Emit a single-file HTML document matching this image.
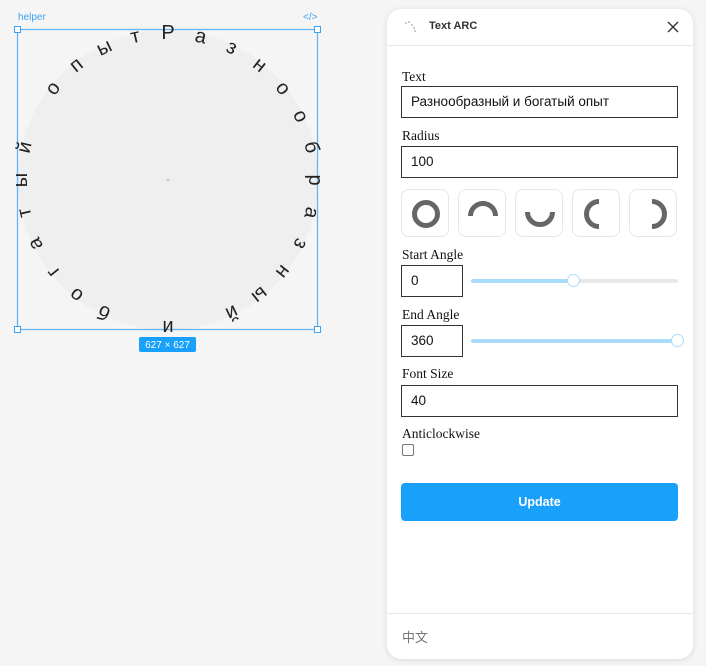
<!DOCTYPE html>
<html><head><meta charset="utf-8"><style>
*{box-sizing:border-box;margin:0;padding:0}
body{width:706px;height:666px;background:#f5f5f5;position:relative;overflow:hidden;font-family:"Liberation Sans",sans-serif}
.a{position:absolute}
.panel{left:387px;top:9px;width:306px;height:650px;background:#fff;border-radius:14px;box-shadow:0 1px 6px rgba(0,0,0,.12)}
.lbl{position:absolute;left:402px;font-family:"Liberation Serif",serif;font-size:13.5px;color:#111}
.inp{position:absolute;left:401px;width:277px;height:32px;border:1.5px solid #333;font-size:13.5px;padding-left:9px;line-height:29px;color:#111}
.btn{position:absolute;top:189px;width:48px;height:48px;border:1px solid #e6e6e6;border-radius:8px}
.track{position:absolute;left:471px;width:207px;height:4px;background:#e8e8e8;border-radius:2px}
.fill{position:absolute;left:0;top:0;height:4px;background:#a9dcf8;border-radius:2px}
.thumb{position:absolute;width:13px;height:13px;border-radius:50%;background:#fff;border:1.5px solid #a9dcf8;top:-5px}
</style></head><body>
<svg class="a" style="left:0;top:0" width="340" height="360">
<text x="18" y="20" font-size="10" fill="#3ea2f2" font-family="Liberation Sans">helper</text>
<text x="303" y="20" font-size="10" fill="#3ea2f2" font-family="Liberation Sans">&lt;/&gt;</text>
<circle cx="168" cy="180" r="150" fill="#efefef"/>
<circle cx="168" cy="180" r="1.5" fill="#ccc"/>
<rect x="17.5" y="29.5" width="300" height="300" fill="none" stroke="#66b5f5" stroke-width="1.3"/>
<g fill="#fff" stroke="#3ea2f2" stroke-width="1">
<rect x="14.5" y="26.5" width="6" height="6"/><rect x="314.5" y="26.5" width="6" height="6"/>
<rect x="14.5" y="326.5" width="6" height="6"/><rect x="314.5" y="326.5" width="6" height="6"/></g>
<rect x="139" y="337" width="57" height="15" rx="2" fill="#18a0fb"/>
<text x="167.5" y="348" font-size="10" fill="#fff" text-anchor="middle" font-family="Liberation Sans">627 × 627</text>
<g font-family="Liberation Sans" font-size="20" fill="#222" text-anchor="middle">
<text x="168" y="39" transform="rotate(0 168 180)">Р</text>
<text x="168" y="39" transform="rotate(12.857 168 180)">а</text>
<text x="168" y="39" transform="rotate(25.714 168 180)">з</text>
<text x="168" y="39" transform="rotate(38.571 168 180)">н</text>
<text x="168" y="39" transform="rotate(51.429 168 180)">о</text>
<text x="168" y="39" transform="rotate(64.286 168 180)">о</text>
<text x="168" y="39" transform="rotate(77.143 168 180)">б</text>
<text x="168" y="39" transform="rotate(90 168 180)">р</text>
<text x="168" y="39" transform="rotate(102.857 168 180)">а</text>
<text x="168" y="39" transform="rotate(115.714 168 180)">з</text>
<text x="168" y="39" transform="rotate(128.571 168 180)">н</text>
<text x="168" y="39" transform="rotate(141.429 168 180)">ы</text>
<text x="168" y="39" transform="rotate(154.286 168 180)">й</text>
<text x="168" y="39" transform="rotate(180 168 180)">и</text>
<text x="168" y="39" transform="rotate(205.714 168 180)">б</text>
<text x="168" y="39" transform="rotate(218.571 168 180)">о</text>
<text x="168" y="39" transform="rotate(231.429 168 180)">г</text>
<text x="168" y="39" transform="rotate(244.286 168 180)">а</text>
<text x="168" y="39" transform="rotate(257.143 168 180)">т</text>
<text x="168" y="39" transform="rotate(270 168 180)">ы</text>
<text x="168" y="39" transform="rotate(282.857 168 180)">й</text>
<text x="168" y="39" transform="rotate(308.571 168 180)">о</text>
<text x="168" y="39" transform="rotate(321.429 168 180)">п</text>
<text x="168" y="39" transform="rotate(334.286 168 180)">ы</text>
<text x="168" y="39" transform="rotate(347.143 168 180)">т</text>
</g></svg>

<div class="a panel"></div>
<svg class="a" style="left:404px;top:20px" width="16" height="14"><g fill="#aaa"><circle cx="2" cy="3" r="0.9"/><circle cx="5" cy="2" r="0.9"/><circle cx="8" cy="5" r="0.9"/><circle cx="10" cy="8" r="0.9"/><circle cx="11" cy="11" r="0.9"/></g></svg>
<div class="a" style="left:429px;top:20px;font-size:11px;font-weight:bold;color:#333">Text ARC</div>
<svg class="a" style="left:667px;top:21px" width="12" height="12"><path d="M1 1L11 11M11 1L1 11" stroke="#333" stroke-width="1.4"/></svg>
<div class="a" style="left:387px;top:45px;width:306px;height:1px;background:#e8e8e8"></div>

<div class="lbl" style="top:69px">Text</div>
<div class="inp" style="top:86px">Разнообразный и богатый опыт</div>
<div class="lbl" style="top:128px">Radius</div>
<div class="inp" style="top:146px">100</div>

<div class="btn" style="left:401px"><svg width="48" height="48"><circle cx="24" cy="24" r="11.5" fill="none" stroke="#666" stroke-width="5"/></svg></div>
<div class="btn" style="left:458px"><svg width="48" height="48"><path d="M11.5 26A12.5 12.5 0 0 1 36.5 26" fill="none" stroke="#666" stroke-width="5"/></svg></div>
<div class="btn" style="left:515px"><svg width="48" height="48"><path d="M11.5 22A12.5 12.5 0 0 0 36.5 22" fill="none" stroke="#666" stroke-width="5"/></svg></div>
<div class="btn" style="left:572px"><svg width="48" height="48"><path d="M26 11.5A12.5 12.5 0 0 0 26 36.5" fill="none" stroke="#666" stroke-width="5"/></svg></div>
<div class="btn" style="left:629px"><svg width="48" height="48"><path d="M22 11.5A12.5 12.5 0 0 1 22 36.5" fill="none" stroke="#666" stroke-width="5"/></svg></div>

<div class="lbl" style="top:247px">Start Angle</div>
<div class="inp" style="top:265px;width:62px">0</div>
<div class="track" style="top:279px"><div class="fill" style="width:102px"></div><div class="thumb" style="left:96px"></div></div>

<div class="lbl" style="top:307px">End Angle</div>
<div class="inp" style="top:325px;width:62px">360</div>
<div class="track" style="top:339px"><div class="fill" style="width:207px"></div><div class="thumb" style="left:200px"></div></div>

<div class="lbl" style="top:366px">Font Size</div>
<div class="inp" style="top:385px">40</div>

<div class="lbl" style="top:426px">Anticlockwise</div>
<div class="a" style="left:402px;top:444px;width:12px;height:12px;border:1px solid #777;border-radius:2px"></div>

<div class="a" style="left:401px;top:483px;width:277px;height:38px;background:#18a0fb;border-radius:4px;color:#fff;font-size:12.5px;font-weight:bold;text-align:center;line-height:38px">Update</div>

<div class="a" style="left:387px;top:613px;width:306px;height:1px;background:#e8e8e8"></div>
<div class="a" style="left:402px;top:627px;font-size:13px;color:#777;font-family:'Liberation Sans','Noto Sans CJK SC',sans-serif">中文</div>
</body></html>
